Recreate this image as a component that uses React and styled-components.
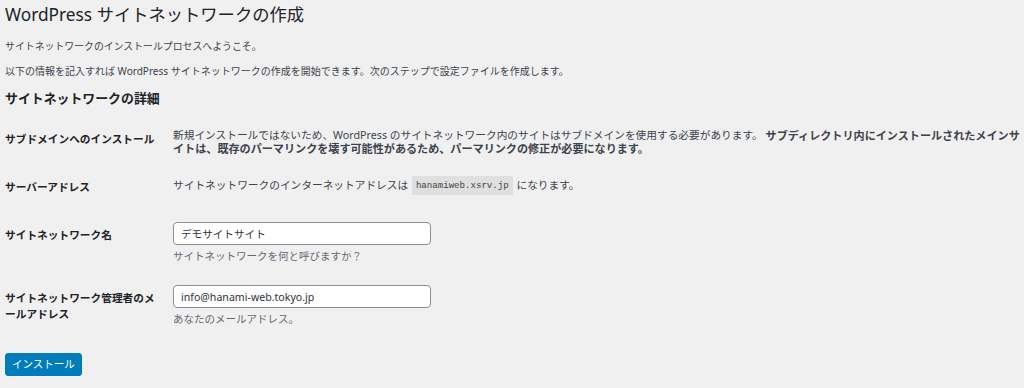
import React from 'react';
import styled, { createGlobalStyle } from 'styled-components';

const GlobalStyle = createGlobalStyle`
  body {
    margin: 0;
    background: #f0f0f1;
    font-family: "Noto Sans", "Noto Sans CJK JP", sans-serif;
    color: #3c434a;
    line-break: loose;
  }
`;

const Wrap = styled.div`
  padding: 5px 0 0 5px;
`;

const Title = styled.h1`
  margin: 0;
  font-size: 17.3px;
  line-height: 20px;
  font-weight: 400;
  color: #1d2327;
`;

const Text = styled.p`
  margin: ${p => p.$top}px 0 0;
  font-size: ${p => p.$size}px;
  line-height: 14px;
`;

const SectionTitle = styled.h2`
  margin: 11px 0 0;
  font-size: 12.9px;
  line-height: 18px;
  font-weight: 700;
  color: #1d2327;
`;

const Form = styled.div`
  margin-top: 12px;
`;

const Row = styled.div`
  display: grid;
  grid-template-columns: 168px 1fr;
  align-items: start;
`;

const Label = styled.div`
  padding: ${p => p.$pad}px 13px 0 0;
  font-size: 10.7px;
  line-height: ${p => (p.$lines ? 16 : 14)}px;
  font-weight: 700;
  color: #1d2327;
`;

const Value = styled.div`
  padding: ${p => p.$pad}px 4px 12px 0;
  font-size: 10.7px;
  line-height: 13px;

  strong {
    font-size: 11.1px;
    font-weight: 700;
    color: #3c434a;
    vertical-align: top;
  }
`;

const Code = styled.code`
  font-family: "Liberation Mono", monospace;
  font-size: 9.1px;
  padding: 4px 4px;
  margin: 0 1px;
  background: rgba(0, 0, 0, 0.07);
  color: #3c434a;
  vertical-align: top;
`;

const Input = styled.input`
  display: block;
  box-sizing: border-box;
  width: 258px;
  height: 23px;
  margin: 0;
  padding: 0 7px;
  border: 1px solid #8c8f94;
  border-radius: 4px;
  background: #fff;
  font-family: "Noto Sans", "Noto Sans CJK JP", sans-serif;
  font-size: 10.6px;
  color: #2c3338;
  outline: none;
`;

const Hint = styled.p`
  margin: 4px 0 0;
  font-size: 10.5px;
  line-height: 14px;
  color: #646970;
`;

const Button = styled.button`
  display: block;
  margin-top: 15px;
  height: 23px;
  padding: 0 6px;
  border: 1px solid #007cba;
  border-radius: 3px;
  background: #007cba;
  color: #fff;
  font-family: "Noto Sans", "Noto Sans CJK JP", sans-serif;
  font-size: 10.5px;
  line-height: 21px;
  cursor: pointer;
`;

export default function App() {
  return (
    <>
      <GlobalStyle />
      <Wrap>
        <Title>WordPress サイトネットワークの作成</Title>
        <Text $top={14} $size={9.9}>サイトネットワークのインストールプロセスへようこそ。</Text>
        <Text $top={11} $size={10}>
          以下の情報を記入すれば WordPress サイトネットワークの作成を開始できます。次のステップで設定ファイルを作成します。
        </Text>
        <SectionTitle>サイトネットワークの詳細</SectionTitle>
        <Form>
          <Row>
            <Label $pad={13}>サブドメインへのインストール</Label>
            <Value $pad={10}>
              新規インストールではないため、WordPress のサイトネットワーク内のサイトはサブドメインを使用する必要があります。{' '}
              <strong>サブディレクトリ内にインストールされたメインサイトは、既存のパーマリンクを壊す可能性があるため、パーマリンクの修正が必要になります。</strong>
            </Value>
          </Row>
          <Row>
            <Label $pad={13}>サーバーアドレス</Label>
            <Value $pad={12}>
              サイトネットワークのインターネットアドレスは <Code>hanamiweb.xsrv.jp</Code> になります。
            </Value>
          </Row>
          <Row>
            <Label $pad={24}>サイトネットワーク名</Label>
            <Value $pad={18}>
              <Input defaultValue="デモサイトサイト" />
              <Hint>サイトネットワークを何と呼びますか？</Hint>
            </Value>
          </Row>
          <Row>
            <Label $pad={15} $lines>サイトネットワーク管理者のメールアドレス</Label>
            <Value $pad={10}>
              <Input defaultValue="info@hanami-web.tokyo.jp" />
              <Hint>あなたのメールアドレス。</Hint>
            </Value>
          </Row>
        </Form>
        <Button>インストール</Button>
      </Wrap>
    </>
  );
}
